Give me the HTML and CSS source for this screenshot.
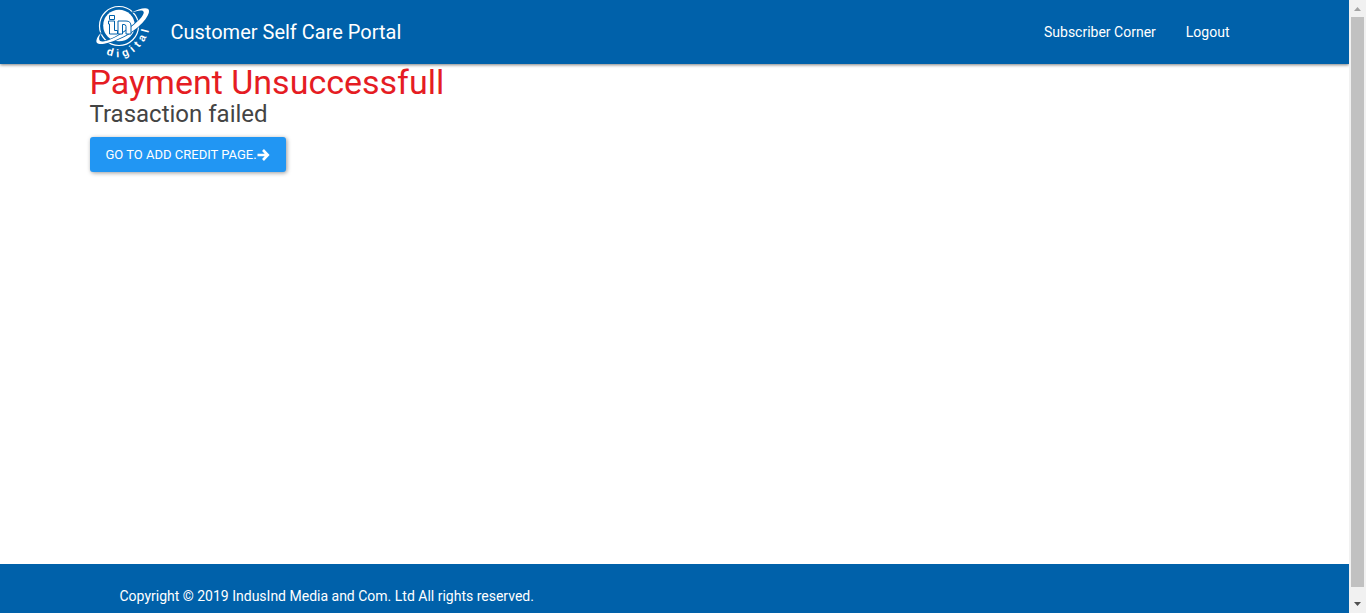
FILE: index.html
```html
<!DOCTYPE html>
<html lang="en">
<head>
<meta charset="utf-8">
<meta name="viewport" content="width=device-width, initial-scale=1">
<title>Customer Self Care Portal</title>
<link rel="stylesheet" href="styles.css">
</head>
<body>
<div class="window">
  <div class="page">
    <header class="navbar">
      <div class="container navbar-row">
        <a class="brand" href="#">
          <svg class="logo" viewBox="0 0 70 64" role="img" aria-label="in digital">
            <circle cx="29" cy="26" r="19.5" fill="none" stroke="#fff" stroke-width="1.2"/>
            <circle cx="29" cy="25.5" r="15.8" fill="#fff"/>
            <path d="M41 13C50 8 60 6 59 12C57 21 43 33 28 39C15 45 5 46 6.500 40C7 37 9 35 12 32C8 37 8 42 13 41.500C20 41 32 34 41 27C50 20 56 13 53 11C51 10 46 11 41 13Z" fill="#fff" stroke="#0061aa" stroke-width="1.600" paint-order="stroke"/>
            <path d="M19.500 15.500h5v4h-5zM18.500 21h6v9.500h3v3.500h-8V24h-1zM28 34V21h8q5 0 5 5v8h-5v-7.500q0-2-2-2h-1.500v9.500z" fill="#fff" stroke="#0061aa" stroke-width="1"/>
            <path id="arc" d="M16 54Q32 61 44 52Q57 42 60 26" fill="none"/>
            <text class="logo-text"><textPath href="#arc">digital</textPath></text>
          </svg>
          <span class="brand-name">Customer Self Care Portal</span>
        </a>
        <nav class="links">
          <a href="#">Subscriber Corner</a>
          <a href="#">Logout</a>
        </nav>
      </div>
    </header>
    <main class="container content">
      <h1 class="status">Payment Unsuccessfull</h1>
      <h2 class="reason">Trasaction failed</h2>
      <button class="btn" type="button">GO TO ADD CREDIT PAGE.<svg class="arrow" viewBox="0 0 12 12" aria-hidden="true"><path d="M0 6h10M5.500 1L10.300 6L5.500 11" fill="none" stroke="#fff" stroke-width="2.600"/></svg></button>
    </main>
    <footer class="footer">
      <div class="container"><p class="copyright">Copyright © 2019 IndusInd Media and Com. Ltd All rights reserved.</p></div>
    </footer>
  </div>
  <div class="scrollbar" aria-hidden="true">
    <svg class="scroll-arrow" viewBox="0 0 17 17"><path d="M5 11L8.500 7L12 11Z" fill="#a3a3a3"/></svg>
    <div class="thumb"></div>
    <svg class="scroll-arrow down" viewBox="0 0 17 17"><path d="M5 6L8.500 10L12 6Z" fill="#505050"/></svg>
  </div>
</div>
</body>
</html>
```
FILE: styles.css
```css
* {
  box-sizing: border-box;
}

body {
  margin: 0;
  font-family: Roboto, "Liberation Sans", sans-serif;
  font-size: 14px;
  line-height: 20px;
  color: #444;
  background: #fff;
}

.window {
  display: flex;
  min-height: 100vh;
}

.page {
  flex: 1;
  display: flex;
  flex-direction: column;
}

.container {
  width: 100%;
  max-width: 1170px;
  margin: 0 auto;
}

.navbar {
  background: #0061aa;
  box-shadow: 0 1px 3px rgba(0, 0, 0, 0.5);
}

.navbar-row {
  display: flex;
  align-items: center;
  justify-content: space-between;
  padding-right: 30px;
}

.brand {
  display: flex;
  align-items: center;
  gap: 11px;
  color: #fff;
  text-decoration: none;
}

.logo {
  width: 70px;
  height: 64px;
}

.logo-text {
  font-family: "Liberation Sans", sans-serif;
  font-size: 11px;
  font-weight: 700;
  letter-spacing: 4px;
  fill: #fff;
}

.brand-name {
  font-size: 20px;
}

.links {
  display: flex;
  gap: 30px;
}

.links a {
  color: #fff;
  text-decoration: none;
}

.content {
  flex: 1;
}

.status,
.reason {
  margin: 0;
  font-weight: 400;
}

.status {
  font-size: 34px;
  line-height: 37px;
  color: #e51c23;
}

.reason {
  font-size: 24px;
  line-height: 26px;
  margin-bottom: 10px;
}

.btn {
  display: flex;
  align-items: center;
  height: 35px;
  padding: 0 16px;
  border: 0;
  border-radius: 3px;
  background: #2196f3;
  box-shadow: 1px 1px 4px rgba(0, 0, 0, 0.4);
  font: inherit;
  font-size: 13px;
  color: #fff;
}

.arrow {
  width: 13px;
  height: 12px;
}

.footer {
  padding: 22px 0 7px;
  background: #0061aa;
  color: #fff;
}

.copyright {
  margin: 0;
  padding: 0 30px;
}

.scrollbar {
  display: flex;
  flex-direction: column;
  width: 17px;
  background: #f1f1f1;
}

.scroll-arrow {
  width: 17px;
  height: 17px;
}

.thumb {
  flex: 1;
  margin: 0 2px;
  background: #c1c1c1;
}

.down {
  margin-top: 9px;
}
```
